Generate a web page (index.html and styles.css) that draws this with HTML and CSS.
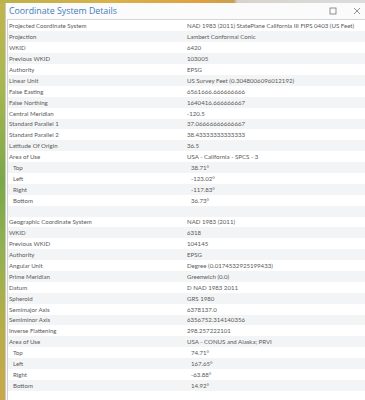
FILE: index.html
```html
<!DOCTYPE html>
<html>
<head>
<meta charset="utf-8">
<link rel="stylesheet" href="styles.css">
</head>
<body>
<div class="desktop">
  <div class="map-top"></div>
  <div class="main">
    <div class="map-left"></div>
    <div class="window">
      <div class="titlebar">
        <span class="title">Coordinate System Details</span>
        <span class="controls">
          <svg class="ctl" width="10" height="10" viewBox="0 0 10 10"><rect x="2" y="2" width="6" height="6" fill="none" stroke="#777" stroke-width="0.8"/></svg>
          <svg class="ctl" width="10" height="10" viewBox="0 0 10 10"><path d="M2 2L8 8M8 2L2 8" stroke="#777" stroke-width="0.8"/></svg>
        </span>
      </div>
      <div class="table">
        <div class="row"><span class="k">Projected Coordinate System</span><span class="v">NAD 1983 (2011) StatePlane California III FIPS 0403 (US Feet)</span></div>
        <div class="row"><span class="k">Projection</span><span class="v">Lambert Conformal Conic</span></div>
        <div class="row"><span class="k">WKID</span><span class="v">6420</span></div>
        <div class="row"><span class="k">Previous WKID</span><span class="v">103005</span></div>
        <div class="row"><span class="k">Authority</span><span class="v">EPSG</span></div>
        <div class="row"><span class="k">Linear Unit</span><span class="v">US Survey Feet (0.3048006096012192)</span></div>
        <div class="row"><span class="k">False Easting</span><span class="v">6561666.666666666</span></div>
        <div class="row"><span class="k">False Northing</span><span class="v">1640416.666666667</span></div>
        <div class="row"><span class="k">Central Meridian</span><span class="v">-120.5</span></div>
        <div class="row"><span class="k">Standard Parallel 1</span><span class="v">37.06666666666667</span></div>
        <div class="row"><span class="k">Standard Parallel 2</span><span class="v">38.43333333333333</span></div>
        <div class="row"><span class="k">Latitude Of Origin</span><span class="v">36.5</span></div>
        <div class="row"><span class="k">Area of Use</span><span class="v">USA - California - SPCS - 3</span></div>
        <div class="row sub"><span class="k">Top</span><span class="v">38.71°</span></div>
        <div class="row sub"><span class="k">Left</span><span class="v">-123.02°</span></div>
        <div class="row sub"><span class="k">Right</span><span class="v">-117.83°</span></div>
        <div class="row sub"><span class="k">Bottom</span><span class="v">36.73°</span></div>
        <div class="row"><span class="k"></span><span class="v"></span></div>
        <div class="row"><span class="k">Geographic Coordinate System</span><span class="v">NAD 1983 (2011)</span></div>
        <div class="row"><span class="k">WKID</span><span class="v">6318</span></div>
        <div class="row"><span class="k">Previous WKID</span><span class="v">104145</span></div>
        <div class="row"><span class="k">Authority</span><span class="v">EPSG</span></div>
        <div class="row"><span class="k">Angular Unit</span><span class="v">Degree (0.0174532925199433)</span></div>
        <div class="row"><span class="k">Prime Meridian</span><span class="v">Greenwich (0.0)</span></div>
        <div class="row"><span class="k">Datum</span><span class="v">D NAD 1983 2011</span></div>
        <div class="row"><span class="k">Spheroid</span><span class="v">GRS 1980</span></div>
        <div class="row"><span class="k">Semimajor Axis</span><span class="v">6378137.0</span></div>
        <div class="row"><span class="k">Semiminor Axis</span><span class="v">6356752.314140356</span></div>
        <div class="row"><span class="k">Inverse Flattening</span><span class="v">298.257222101</span></div>
        <div class="row"><span class="k">Area of Use</span><span class="v">USA - CONUS and Alaska; PRVI</span></div>
        <div class="row sub"><span class="k">Top</span><span class="v">74.71°</span></div>
        <div class="row sub"><span class="k">Left</span><span class="v">167.65°</span></div>
        <div class="row sub"><span class="k">Right</span><span class="v">-63.88°</span></div>
        <div class="row sub"><span class="k">Bottom</span><span class="v">14.92°</span></div>
      </div>
    </div>
  </div>
</div>
</body>
</html>
```
FILE: styles.css
```css
html, body {
  margin: 0;
  padding: 0;
  width: 365px;
  height: 400px;
  overflow: hidden;
  background: #fff;
}
.desktop {
  display: flex;
  flex-direction: column;
  width: 365px;
  height: 400px;
  font-family: "Lato", "Open Sans", sans-serif;
}
.map-top {
  height: 3px;
  flex: none;
  background: linear-gradient(90deg, #b9b34a 0%, #d9b14a 30%, #e0a040 55%, #c9a050 64%, #d7d3cc 65%, #dcdcdc 100%);
}
.main {
  flex: 1;
  display: flex;
  min-height: 0;
}
.map-left {
  width: 5px;
  flex: none;
  background: linear-gradient(180deg, #c2b44c 0%, #a8b850 20%, #7aa848 45%, #8fb050 60%, #b5ae48 80%, #c9a848 100%);
}
.window {
  flex: 1;
  display: flex;
  flex-direction: column;
  background: #fbfbfb;
  border-left: 1px solid #c9c9c9;
  min-width: 0;
}
.titlebar {
  height: 16px;
  flex: none;
  display: flex;
  align-items: center;
  justify-content: space-between;
  padding: 0 0 0 3px;
}
.title {
  font-family: "Open Sans", "Noto Sans", sans-serif;
  font-size: 8.8px;
  color: #3f7cbf;
  line-height: 1;
}
.controls {
  display: flex;
  gap: 14px;
  padding-right: 3px;
  align-items: center;
}
.ctl { display: block; }
.table {
  flex: 1;
  margin-left: 1px;
  border-left: 1px solid #d0d0d0;
  border-top: 1px solid #d6d6d6;
  background: #fff;
  padding-top: 0.5px;
}
.row {
  display: flex;
  height: 10.9px;
  align-items: center;
  font-family: "Lato", sans-serif;
  font-size: 6.1px;
  color: #5a5a5a;
  white-space: nowrap;
}
.row:nth-child(even) { background: #f3f4f5; }
.k {
  width: 178px;
  flex: none;
  padding-left: 1px;
}
.v { flex: 1; }
.sub .k { padding-left: 5px; width: 174px; }
.sub .v { padding-left: 4px; }
```
